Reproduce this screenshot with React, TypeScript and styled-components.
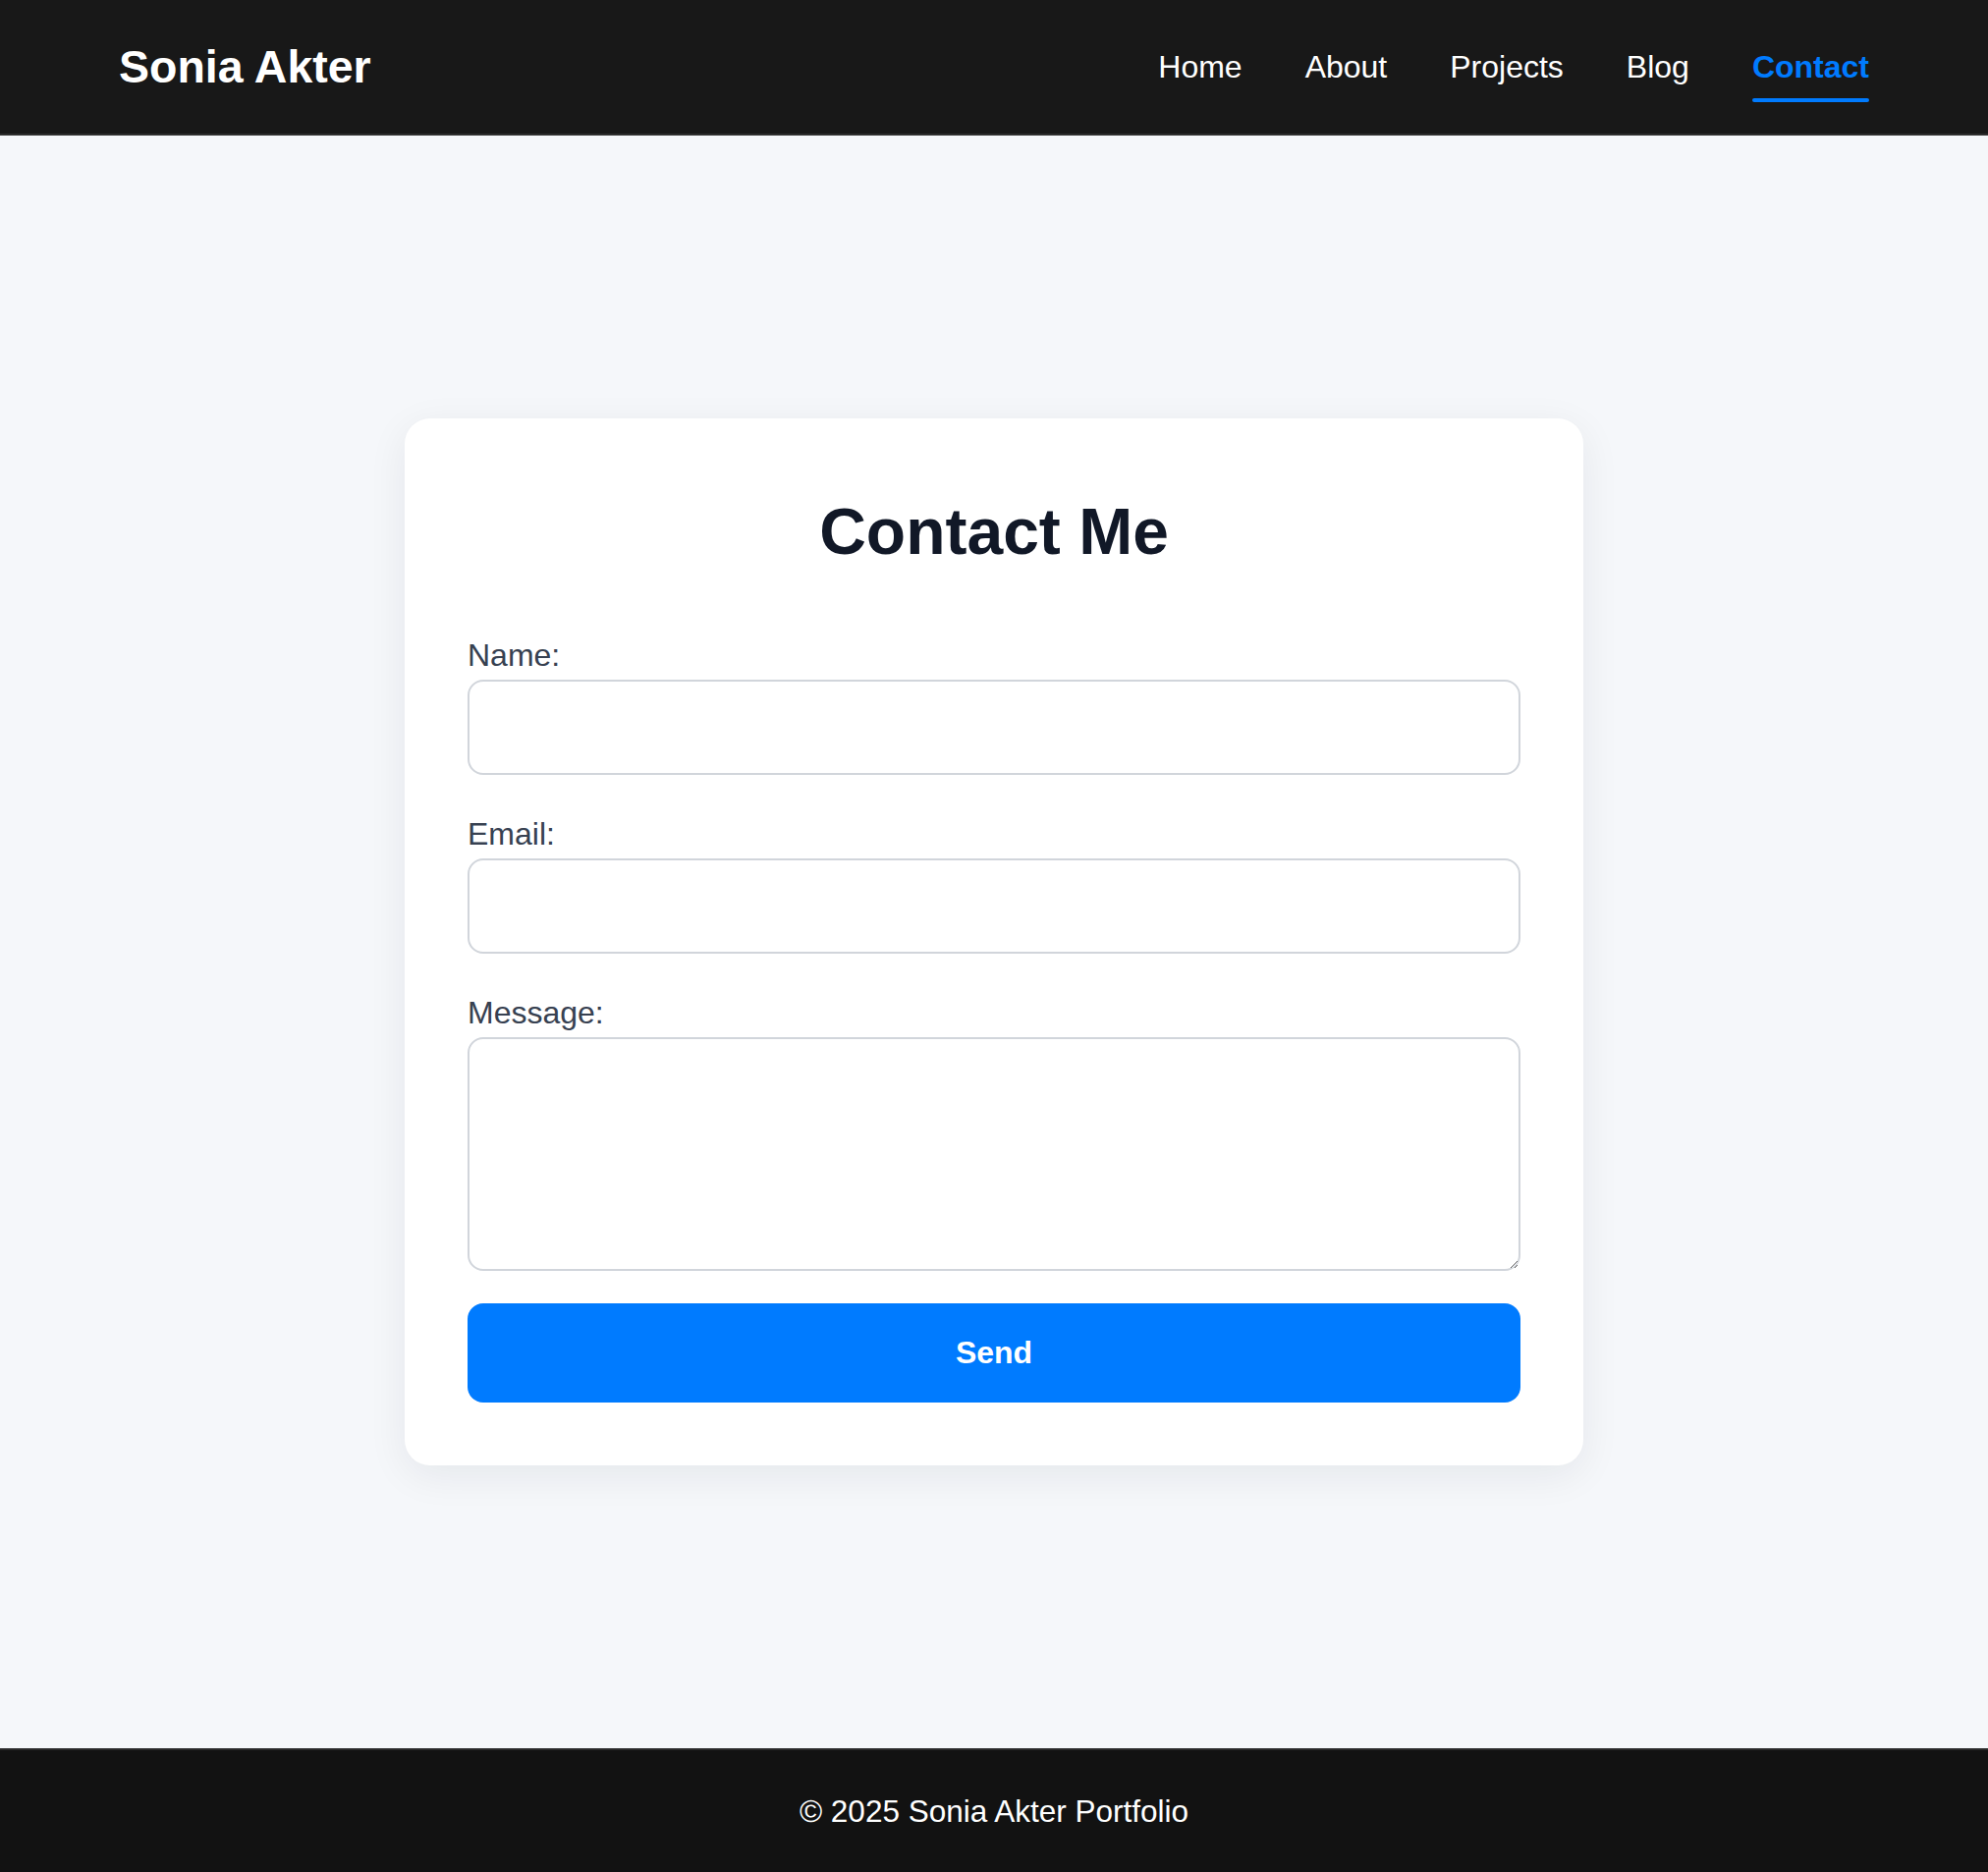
import styled, { createGlobalStyle } from "styled-components";

const GlobalStyle = createGlobalStyle`
  * {
    box-sizing: border-box;
  }
  html,
  body {
    margin: 0;
    padding: 0;
  }
  body {
    background-color: #f5f7fa;
    font-family: "Liberation Sans", Arial, Helvetica, sans-serif;
  }
`;

// page frame
const Page = styled.div`
  display: flex;
  flex-direction: column;
  min-height: 100vh;
`;

// header + nav
const Header = styled.header`
  display: flex;
  align-items: center;
  justify-content: space-between;
  height: 138px;
  padding: 0 121px;
  background-color: #181818;
  border-bottom: 2px solid #2e2e2e;
`;
const Logo = styled.div`
  color: #ffffff;
  font-size: 46.5px;
  font-weight: 700;
`;
const Nav = styled.nav`
  display: flex;
  align-items: center;
  gap: 64px;
`;
const NavLink = styled.a<{ $active?: boolean }>`
  position: relative;
  color: ${(p) => (p.$active ? "#007bff" : "#ffffff")};
  font-size: 32px;
  font-weight: ${(p) => (p.$active ? 700 : 400)};
  text-decoration: none;
  cursor: pointer;
  &::after {
    content: "";
    display: ${(p) => (p.$active ? "block" : "none")};
    position: absolute;
    left: 0;
    right: 0;
    bottom: -17px;
    height: 4px;
    border-radius: 2px;
    background-color: #007bff;
  }
`;

// contact card
const Main = styled.main`
  flex: 1;
  display: flex;
  align-items: center;
  justify-content: center;
  padding: 40px 0;
`;
const Card = styled.div`
  width: 1200px;
  padding: 64px;
  background-color: #ffffff;
  border-radius: 26px;
  box-shadow: 0 10px 40px rgba(17, 24, 39, 0.07);
`;
const Title = styled.h2`
  margin: 13px 0 70px;
  text-align: center;
  color: #111827;
  font-size: 66px;
  font-weight: 700;
`;
const Form = styled.form`
  display: flex;
  flex-direction: column;
`;
const Label = styled.label`
  display: block;
  margin-bottom: 6px;
  color: #374151;
  font-size: 32px;
`;
const Input = styled.input`
  display: block;
  width: 100%;
  height: 97px;
  margin-bottom: 42px;
  padding: 0 24px;
  border: 2px solid #d1d5db;
  border-radius: 16px;
  background: #ffffff;
  font-family: inherit;
  font-size: 30px;
  outline: none;
`;
const TextArea = styled.textarea`
  display: block;
  width: 100%;
  height: 238px;
  margin-bottom: 33px;
  padding: 20px 24px;
  border: 2px solid #d1d5db;
  border-radius: 16px;
  background: #ffffff;
  font-family: inherit;
  font-size: 30px;
  resize: vertical;
  outline: none;
`;
const SendButton = styled.button`
  width: 100%;
  height: 101px;
  border: none;
  border-radius: 16px;
  background-color: #007bff;
  color: #ffffff;
  font-family: inherit;
  font-size: 32px;
  font-weight: 700;
  cursor: pointer;
`;

// footer
const Footer = styled.footer`
  display: flex;
  align-items: center;
  justify-content: center;
  height: 126px;
  background-color: #121212;
  border-top: 2px solid #2a2a2a;
  color: #ffffff;
  font-size: 31.5px;
`;

const links = ["Home", "About", "Projects", "Blog", "Contact"];

const App = () => {
  return (
    <>
      <GlobalStyle />
      <Page>
        <Header>
          <Logo>Sonia Akter</Logo>
          <Nav>
            {links.map((l) => (
              <NavLink key={l} $active={l === "Contact"}>
                {l}
              </NavLink>
            ))}
          </Nav>
        </Header>
        <Main>
          <Card>
            <Title>Contact Me</Title>
            <Form onSubmit={(e) => e.preventDefault()}>
              <Label htmlFor="name">Name:</Label>
              <Input id="name" type="text" />
              <Label htmlFor="email">Email:</Label>
              <Input id="email" type="email" />
              <Label htmlFor="message">Message:</Label>
              <TextArea id="message" />
              <SendButton type="submit">Send</SendButton>
            </Form>
          </Card>
        </Main>
        <Footer>© 2025 Sonia Akter Portfolio</Footer>
      </Page>
    </>
  );
};

export default App;
